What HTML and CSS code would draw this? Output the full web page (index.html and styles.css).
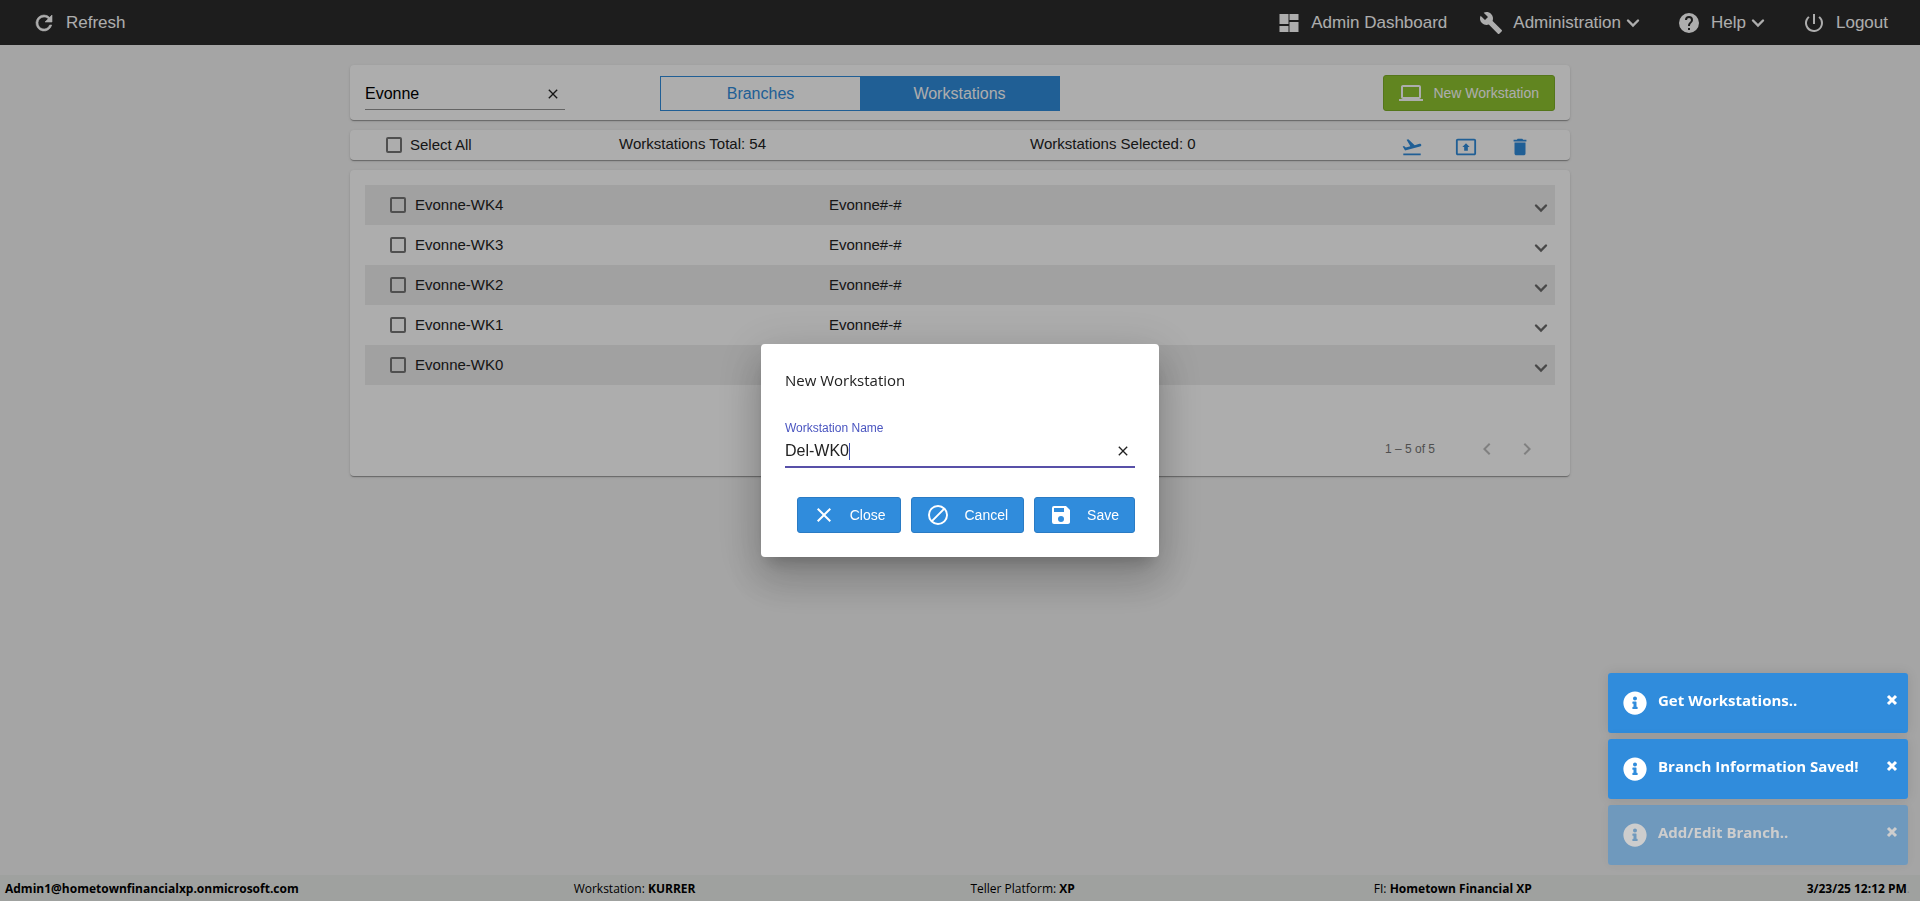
FILE: index.html
```html
<!DOCTYPE html>
<html lang="en">
<head>
    <meta charset="UTF-8">
    <meta name="viewport" content="width=device-width, initial-scale=1.0">
    <title>Workstations</title>
    <link rel="stylesheet" href="styles.css">
</head>
<body>
    <svg class="sprite" aria-hidden="true">
        <symbol id="chevron" viewBox="0 0 24 24"><path d="M7 9.5l5 5 5-5" fill="none" stroke="currentColor" stroke-width="2.4" stroke-linecap="round"/></symbol>
        <symbol id="clear" viewBox="0 0 24 24"><path d="M19 6.41 17.59 5 12 10.59 6.41 5 5 6.41 10.59 12 5 17.59 6.41 19 12 13.41 17.59 19 19 17.59 13.41 12z"/></symbol>
        <symbol id="info" viewBox="0 0 512 512"><path d="M256 8C119 8 8 119 8 256s111 248 248 248 248-111 248-248S393 8 256 8zm0 110c23 0 42 19 42 42s-19 42-42 42-42-19-42-42 19-42 42-42zm56 254c0 7-5 12-12 12h-88c-7 0-12-5-12-12v-24c0-7 5-12 12-12h12v-64h-12c-7 0-12-5-12-12v-24c0-7 5-12 12-12h64c7 0 12 5 12 12v100h12c7 0 12 5 12 12z"/></symbol>
    </svg>

    <header class="topbar">
        <a class="nav-link" href="#">
            <svg viewBox="0 0 24 24"><path d="M17.65 6.35A7.96 7.96 0 0 0 12 4a8 8 0 1 0 7.73 10h-2.08A6 6 0 1 1 12 6c1.66 0 3.14.69 4.22 1.78L13 11h7V4z" stroke="currentColor" stroke-width=".6"/></svg>
            Refresh
        </a>
        <nav class="topbar-right">
            <a class="nav-link" href="#">
                <svg viewBox="0 0 24 24"><path d="M2.5 13h9V3h-9zm0 8h9v-6h-9zm10 0h9V11h-9zm0-18v6h9V3z"/></svg>
                Admin Dashboard
            </a>
            <button type="button" class="nav-link">
                <svg viewBox="0 0 24 24"><path d="M22.7 19l-9.1-9.1c.9-2.3.4-5-1.5-6.9-2-2-5-2.4-7.4-1.3L9 6 6 9 1.6 4.7C.4 7.1.9 10.1 2.9 12.1c1.9 1.9 4.6 2.4 6.9 1.5l9.1 9.1c.4.4 1 .4 1.4 0l2.3-2.3c.5-.4.5-1.1.1-1.4z"/></svg>
                Administration
                <svg class="caret"><use href="#chevron"/></svg>
            </button>
            <button type="button" class="nav-link">
                <svg viewBox="0 0 24 24"><path d="M12 2a10 10 0 1 0 0 20 10 10 0 0 0 0-20zm1 17h-2v-2h2zm2.07-7.75-.9.92C13.45 12.9 13 13.5 13 15h-2v-.5c0-1.1.45-2.1 1.17-2.83l1.24-1.26c.37-.36.59-.86.59-1.41a2 2 0 1 0-4 0H8a4 4 0 1 1 8 0c0 .88-.36 1.68-.93 2.25z"/></svg>
                Help
                <svg class="caret"><use href="#chevron"/></svg>
            </button>
            <a class="nav-link" href="#">
                <svg viewBox="0 0 24 24"><path d="M13 3h-2v10h2zm4.83 2.17-1.42 1.42A6.92 6.92 0 0 1 19 12a7 7 0 1 1-11.42-5.42L6.17 5.17A9 9 0 1 0 21 12a8.93 8.93 0 0 0-3.17-6.83z"/></svg>
                Logout
            </a>
        </nav>
    </header>

    <main class="content">
        <section class="card toolbar">
            <div class="search">
                <input type="text" value="Evonne" aria-label="Search">
                <button type="button" class="clear-button" aria-label="Clear search"><svg><use href="#clear"/></svg></button>
            </div>
            <div class="toggle">
                <button type="button">Branches</button>
                <button type="button" class="active">Workstations</button>
            </div>
            <button type="button" class="btn btn-new">
                <svg viewBox="0 0 24 24"><path d="M20 18c1.1 0 2-.9 2-2V6c0-1.1-.9-2-2-2H4c-1.1 0-2 .9-2 2v10c0 1.1.9 2 2 2H0v2h24v-2zM4 6h16v10H4z"/></svg>
                New Workstation
            </button>
        </section>

        <section class="card summary">
            <label class="check"><input type="checkbox"> <span>Select All</span></label>
            <span>Workstations Total: 54</span>
            <span>Workstations Selected: 0</span>
            <div class="actions">
                <button type="button" aria-label="Send"><svg viewBox="0 0 24 24"><path d="M2.5 19h19v2h-19zm19.57-9.36c-.21-.8-1.04-1.28-1.84-1.06L14.92 10l-6.9-6.43-1.93.51 4.14 7.17-4.97 1.33-1.97-1.54-1.45.39 2.59 4.49 16.23-4.35a1.49 1.49 0 0 0 1.41-1.93z"/></svg></button>
                <button type="button" aria-label="Upload"><svg viewBox="0 0 24 24"><path d="M21 3H3c-1.1 0-2 .9-2 2v14c0 1.1.9 2 2 2h18c1.1 0 2-.9 2-2V5c0-1.1-.9-2-2-2zm0 16H3V5h18zM10 16h4v-4h2l-4-4-4 4h2z"/></svg></button>
                <button type="button" aria-label="Delete"><svg viewBox="0 0 24 24"><path d="M6 19c0 1.1.9 2 2 2h8c1.1 0 2-.9 2-2V7H6zM19 4h-3.5l-1-1h-5l-1 1H5v2h14z"/></svg></button>
            </div>
        </section>

        <section class="card list">
            <div class="row">
                <label class="check"><input type="checkbox"> <span>Evonne-WK4</span></label>
                <span>Evonne#-#</span>
                <button type="button" class="expand" aria-label="Expand"><svg><use href="#chevron"/></svg></button>
            </div>
            <div class="row">
                <label class="check"><input type="checkbox"> <span>Evonne-WK3</span></label>
                <span>Evonne#-#</span>
                <button type="button" class="expand" aria-label="Expand"><svg><use href="#chevron"/></svg></button>
            </div>
            <div class="row">
                <label class="check"><input type="checkbox"> <span>Evonne-WK2</span></label>
                <span>Evonne#-#</span>
                <button type="button" class="expand" aria-label="Expand"><svg><use href="#chevron"/></svg></button>
            </div>
            <div class="row">
                <label class="check"><input type="checkbox"> <span>Evonne-WK1</span></label>
                <span>Evonne#-#</span>
                <button type="button" class="expand" aria-label="Expand"><svg><use href="#chevron"/></svg></button>
            </div>
            <div class="row">
                <label class="check"><input type="checkbox"> <span>Evonne-WK0</span></label>
                <span></span>
                <button type="button" class="expand" aria-label="Expand"><svg><use href="#chevron"/></svg></button>
            </div>
            <div class="paginator">
                <span>1 – 5 of 5</span>
                <button type="button" disabled aria-label="Previous page"><svg viewBox="0 0 24 24"><path d="M15.41 7.41 14 6l-6 6 6 6 1.41-1.41L10.83 12z"/></svg></button>
                <button type="button" disabled aria-label="Next page"><svg viewBox="0 0 24 24"><path d="M10 6 8.59 7.41 13.17 12l-4.58 4.59L10 18l6-6z"/></svg></button>
            </div>
        </section>
    </main>

    <footer class="statusbar">
        <b>Admin1@hometownfinancialxp.onmicrosoft.com</b>
        <span>Workstation: <b>KURRER</b></span>
        <span class="platform">Teller Platform: <b>XP</b></span>
        <span>FI: <b>Hometown Financial XP</b></span>
        <span><b>3/23/25 12:12 PM</b><span class="dot">.</span></span>
    </footer>

    <div class="backdrop">
        <form class="dialog" role="dialog" aria-labelledby="dialog-title">
            <h1 id="dialog-title">New Workstation</h1>
            <label for="ws-name">Workstation Name</label>
            <div class="field">
                <input type="text" id="ws-name" value="Del-WK0">
                <button type="button" class="clear-button" aria-label="Clear name"><svg><use href="#clear"/></svg></button>
            </div>
            <div class="dialog-actions">
                <button type="button" class="btn">
                    <svg><use href="#clear"/></svg>
                    Close
                </button>
                <button type="button" class="btn">
                    <svg viewBox="0 0 24 24"><path d="M12 2a10 10 0 1 0 0 20 10 10 0 0 0 0-20zM4 12a8 8 0 0 1 12.9-6.31L5.69 16.9A7.9 7.9 0 0 1 4 12zm8 8a7.9 7.9 0 0 1-4.9-1.69L18.31 7.1A8 8 0 0 1 12 20z"/></svg>
                    Cancel
                </button>
                <button type="button" class="btn">
                    <svg viewBox="0 0 24 24"><path d="M17 3H5a2 2 0 0 0-2 2v14a2 2 0 0 0 2 2h14c1.1 0 2-.9 2-2V7zm-5 16a3 3 0 1 1 0-6 3 3 0 0 1 0 6zm3-10H5V5h10z"/></svg>
                    Save
                </button>
            </div>
        </form>
    </div>

    <div class="toasts">
        <div class="toast">
            <svg><use href="#info"/></svg>
            <span>Get Workstations..</span>
            <button type="button" aria-label="Dismiss"><svg viewBox="0 0 12 12"><path d="M2 2l8 8M10 2l-8 8"/></svg></button>
        </div>
        <div class="toast">
            <svg><use href="#info"/></svg>
            <span>Branch Information Saved!</span>
            <button type="button" aria-label="Dismiss"><svg viewBox="0 0 12 12"><path d="M2 2l8 8M10 2l-8 8"/></svg></button>
        </div>
        <div class="toast fading">
            <svg><use href="#info"/></svg>
            <span>Add/Edit Branch..</span>
            <button type="button" aria-label="Dismiss"><svg viewBox="0 0 12 12"><path d="M2 2l8 8M10 2l-8 8"/></svg></button>
        </div>
    </div>
</body>
</html>
```
FILE: styles.css
```css
* {
    box-sizing: border-box;
}

body {
    margin: 0;
    min-height: 100vh;
    display: flex;
    flex-direction: column;
    background-color: #f3f3f3;
    color: #222;
    font-family: "Liberation Sans", Arial, sans-serif;
    font-size: 15px;
}

button {
    border: none;
    background: none;
    padding: 0;
    color: inherit;
    font: inherit;
    cursor: pointer;
}

svg {
    width: 24px;
    height: 24px;
    flex: none;
    fill: currentColor;
}

.sprite {
    display: none;
}

/* Top bar */
.topbar {
    height: 45px;
    padding: 0 32px;
    display: flex;
    justify-content: space-between;
    align-items: center;
    background-color: #2c2c2c;
    color: white;
    font-size: 17px;
}

.topbar-right {
    display: flex;
    gap: 32px;
}

.nav-link {
    display: flex;
    align-items: center;
    gap: 10px;
    color: white;
    text-decoration: none;
}

.nav-link .caret {
    margin-left: -10px;
}

/* Cards */
.content {
    flex: 1;
    width: 100%;
    max-width: 1220px;
    margin: 0 auto;
    padding: 20px 0;
    display: flex;
    flex-direction: column;
    gap: 10px;
}

.card {
    background-color: white;
    border-radius: 4px;
    box-shadow: 0 2px 1px -1px rgba(0, 0, 0, 0.2), 0 1px 1px 0 rgba(0, 0, 0, 0.14), 0 1px 3px 0 rgba(0, 0, 0, 0.12);
}

.toolbar {
    height: 55px;
    padding: 0 15px;
    display: grid;
    grid-template-columns: 200px 400px 1fr;
    column-gap: 95px;
    align-items: center;
}

.search,
.field {
    display: flex;
    align-items: center;
    border-bottom: 1px solid #949494;
}

.search input,
.field input {
    flex: 1;
    min-width: 0;
    border: none;
    outline: none;
    padding: 0;
    background: none;
    font: inherit;
    font-size: 16px;
}

.search {
    height: 34px;
    padding-top: 3px;
}

.clear-button {
    display: flex;
    margin-right: 4px;
}

.clear-button svg {
    width: 16px;
    height: 16px;
}

.toggle {
    height: 35px;
    margin-top: 2px;
    display: grid;
    grid-template-columns: 1fr 1fr;
    border: 1px solid #308cdc;
    color: #308cdc;
    font-size: 16px;
}

.toggle .active {
    background-color: #308cdc;
    color: white;
}

.btn {
    height: 36px;
    padding: 0 15px 0 14px;
    display: flex;
    align-items: center;
    gap: 14px;
    border: 1px solid #2a7bc4;
    border-radius: 3px;
    background-color: #308cdc;
    color: white;
    font-size: 14px;
}

.btn-new {
    justify-self: end;
    gap: 10px;
    padding: 0 15px;
    border-color: #7eae28;
    background-color: #8fc530;
}

/* Summary line */
.summary {
    height: 30px;
    padding: 0 39px 0 36px;
    display: grid;
    grid-template-columns: 233px 411px 1fr auto;
    align-items: center;
}

.summary > span {
    padding-bottom: 4px;
}

.row > span,
.check span {
    padding-bottom: 2px;
}

.check {
    display: flex;
    align-items: center;
    gap: 8px;
}

.check input {
    appearance: none;
    width: 16px;
    height: 16px;
    margin: 0;
    border: 2px solid #757575;
    border-radius: 2px;
}

.actions {
    padding-top: 3px;
    display: flex;
    gap: 32px;
    color: #308cdc;
}

.actions button,
.expand,
.paginator button {
    display: flex;
}

.actions svg {
    width: 22px;
    height: 22px;
}

/* Workstation rows */
.list {
    padding: 15px 15px 0;
}

.row {
    height: 40px;
    padding: 0 2px 0 25px;
    display: grid;
    grid-template-columns: 439px 1fr auto;
    align-items: center;
}

.row:nth-child(odd) {
    background-color: #ededed;
}

.row .check {
    gap: 9px;
}

.expand {
    padding-top: 5px;
}

.expand svg {
    color: #6b6b6b;
}

.paginator {
    height: 91px;
    padding: 36px 16px 0 0;
    display: flex;
    justify-content: flex-end;
    align-items: center;
    gap: 16px;
    color: #757575;
    font-size: 12px;
}

.paginator span {
    margin-right: 24px;
}

.paginator button {
    color: #bdbdbd;
}

/* Status bar */
.statusbar {
    height: 26px;
    padding: 0 10px 0 5px;
    display: flex;
    justify-content: space-between;
    align-items: center;
    background-color: #ebeeeb;
    color: black;
    font-family: "Open Sans", "Noto Sans", sans-serif;
    font-size: 12px;
}

.platform {
    padding-right: 24px;
}

.dot {
    color: #bbb;
}

/* New workstation dialog */
.backdrop {
    position: fixed;
    inset: 0;
    display: flex;
    justify-content: center;
    align-items: center;
    background-color: rgba(0, 0, 0, 0.32);
}

.dialog {
    width: 398px;
    padding: 24px;
    border-radius: 4px;
    background-color: white;
    box-shadow: 0 11px 15px -7px rgba(0, 0, 0, 0.2), 0 24px 38px 3px rgba(0, 0, 0, 0.14), 0 9px 46px 8px rgba(0, 0, 0, 0.12);
}

.dialog h1 {
    margin: 0 0 28px;
    font-family: "Open Sans", "Noto Sans", sans-serif;
    font-size: 15px;
    font-weight: normal;
    line-height: 24px;
}

.dialog label {
    display: block;
    color: #4a55c0;
    font-size: 12px;
    line-height: 16px;
}

.field {
    height: 32px;
    border-bottom: 2px solid #5850a8;
}

/* text cursor at the end of the name */
.field input {
    color: #222;
    background: linear-gradient(#3f51b5, #3f51b5) 64px center / 1px 17px no-repeat;
}

.dialog-actions {
    margin-top: 29px;
    display: flex;
    justify-content: flex-end;
    gap: 10px;
}

/* Toasts */
.toasts {
    position: fixed;
    right: 12px;
    bottom: 36px;
    width: 300px;
    display: flex;
    flex-direction: column;
    gap: 6px;
}

.toast {
    height: 60px;
    padding: 0 10px 0 15px;
    display: flex;
    align-items: center;
    gap: 11px;
    border-radius: 3px;
    background-color: #308cdc;
    box-shadow: 0 0 12px rgba(0, 0, 0, 0.1);
    color: white;
    font-family: "Open Sans", "Noto Sans", sans-serif;
    font-size: 15px;
    font-weight: bold;
}

.toast span {
    flex: 1;
    padding-bottom: 6px;
}

.toast button {
    display: flex;
    padding-bottom: 6px;
}

.toast button svg {
    width: 12px;
    height: 12px;
    stroke: currentColor;
    stroke-width: 3;
}

.toast.fading {
    opacity: 0.45;
}
```
